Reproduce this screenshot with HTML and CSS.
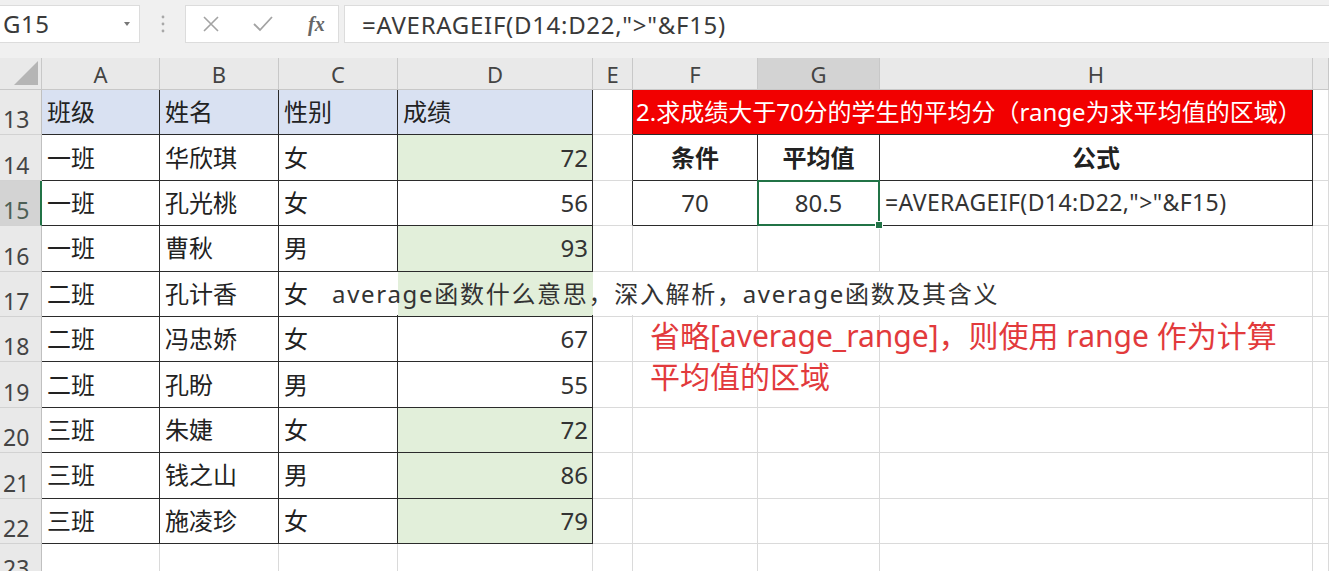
FILE: index.html
```html
<!DOCTYPE html>
<html lang="zh">
<head>
<meta charset="utf-8">
<title>AVERAGEIF</title>
<link rel="stylesheet" href="styles.css">
</head>
<body>
<div class="toolbar">
  <div class="namebox"><span class="name">G15</span><span class="dd"></span></div>
  <div class="grip"><svg width="6" height="20" viewBox="0 0 6 20"><circle cx="3" cy="3" r="1.4" fill="#a8a8a8"/><circle cx="3" cy="10" r="1.4" fill="#a8a8a8"/><circle cx="3" cy="17" r="1.4" fill="#a8a8a8"/></svg></div>
  <div class="fnbtns">
    <svg class="ic" width="18" height="18" viewBox="0 0 18 18"><path d="M2 2 L16 16 M16 2 L2 16" stroke="#a3a3a3" stroke-width="1.6" fill="none"/></svg>
    <svg class="ic" width="22" height="18" viewBox="0 0 22 18"><path d="M2 9 L8 15 L20 2" stroke="#a3a3a3" stroke-width="1.8" fill="none"/></svg>
    <span class="fx">fx</span>
  </div>
  <div class="formula">=AVERAGEIF(D14:D22,"&gt;"&amp;F15)</div>
</div>

<div class="sheet">
  <div class="ch corner"></div>
  <div class="ch">A</div><div class="ch">B</div><div class="ch">C</div><div class="ch">D</div><div class="ch">E</div><div class="ch">F</div><div class="ch sel">G</div><div class="ch">H</div><div class="ch"></div>

  <div class="rh">13</div>
  <div class="c t hd">班级</div><div class="c t hd">姓名</div><div class="c t hd">性别</div><div class="c t hd">成绩</div><div class="c e"></div>
  <div class="c red">2.求成绩大于70分的学生的平均分（range为求平均值的区域）</div><div class="c"></div>

  <div class="rh">14</div>
  <div class="c t">一班</div><div class="c t">华欣琪</div><div class="c t">女</div><div class="c t g num">72</div><div class="c e"></div>
  <div class="c t2 b ctr">条件</div><div class="c t2 b ctr">平均值</div><div class="c t2 b ctr">公式</div><div class="c"></div>

  <div class="rh rsel">15</div>
  <div class="c t">一班</div><div class="c t">孔光桃</div><div class="c t">女</div><div class="c t num">56</div><div class="c e"></div>
  <div class="c t2 ctr">70</div><div class="c t2 ctr active">80.5</div><div class="c t2 fml">=AVERAGEIF(D14:D22,"&gt;"&amp;F15)</div><div class="c"></div>

  <div class="rh">16</div>
  <div class="c t">一班</div><div class="c t">曹秋</div><div class="c t">男</div><div class="c t g num">93</div><div class="c"></div>
  <div class="c"></div><div class="c"></div><div class="c"></div><div class="c"></div>

  <div class="rh">17</div>
  <div class="c t">二班</div><div class="c t">孔计香</div><div class="c t">女</div><div class="c t g num"></div><div class="c"></div>
  <div class="c"></div><div class="c"></div><div class="c"></div><div class="c"></div>

  <div class="rh">18</div>
  <div class="c t">二班</div><div class="c t">冯忠娇</div><div class="c t">女</div><div class="c t num">67</div><div class="c"></div>
  <div class="c"></div><div class="c"></div><div class="c"></div><div class="c"></div>

  <div class="rh">19</div>
  <div class="c t">二班</div><div class="c t">孔盼</div><div class="c t">男</div><div class="c t num">55</div><div class="c"></div>
  <div class="c"></div><div class="c"></div><div class="c"></div><div class="c"></div>

  <div class="rh">20</div>
  <div class="c t">三班</div><div class="c t">朱婕</div><div class="c t">女</div><div class="c t g num">72</div><div class="c"></div>
  <div class="c"></div><div class="c"></div><div class="c"></div><div class="c"></div>

  <div class="rh">21</div>
  <div class="c t">三班</div><div class="c t">钱之山</div><div class="c t">男</div><div class="c t g num">86</div><div class="c"></div>
  <div class="c"></div><div class="c"></div><div class="c"></div><div class="c"></div>

  <div class="rh">22</div>
  <div class="c t">三班</div><div class="c t">施凌珍</div><div class="c t">女</div><div class="c t g num">79</div><div class="c"></div>
  <div class="c"></div><div class="c"></div><div class="c"></div><div class="c"></div>

  <div class="rh">23</div>
  <div class="c"></div><div class="c"></div><div class="c"></div><div class="c"></div><div class="c"></div>
  <div class="c"></div><div class="c"></div><div class="c"></div><div class="c"></div>
</div>

<div class="overlay">average函数什么意思，深入解析，average函数及其含义</div>
<div class="note">省略[average_range]，则使用 range 作为计算<br>平均值的区域</div>
</body>
</html>
```

FILE: styles.css
```css
html, body {
  margin: 0;
  padding: 0;
}
body {
  width: 1329px;
  height: 571px;
  overflow: hidden;
  position: relative;
  background: #ffffff;
  font-family: "Noto Sans", "Noto Sans CJK SC", sans-serif;
  color: #222;
}

/* formula bar */
.toolbar {
  display: flex;
  align-items: flex-start;
  height: 58px;
  box-sizing: border-box;
  padding-top: 5px;
  background: #f0f0f0;
}
.namebox {
  width: 140px;
  height: 38px;
  box-sizing: border-box;
  background: #fff;
  border: 1px solid #dcdcdc;
  border-left: none;
  display: flex;
  align-items: center;
  justify-content: space-between;
  padding: 0 9px 0 3px;
}
.name {
  font-size: 24px;
  letter-spacing: 0.5px;
  color: #3a3a3a;
  line-height: 1;
}
.dd {
  width: 0;
  height: 0;
  border-left: 3.5px solid transparent;
  border-right: 3.5px solid transparent;
  border-top: 4px solid #777;
}
.grip {
  width: 45px;
  height: 38px;
  display: flex;
  align-items: center;
  justify-content: center;
}
.fnbtns {
  width: 154px;
  height: 38px;
  box-sizing: border-box;
  background: #fff;
  border: 1px solid #dcdcdc;
  display: flex;
  align-items: center;
  padding-left: 16px;
  gap: 32px;
}
.fx {
  font-family: "Liberation Serif", serif;
  font-style: italic;
  font-weight: bold;
  font-size: 20px;
  color: #666;
  margin-left: 2px;
}
.formula {
  margin-left: 5px;
  flex: 1;
  height: 38px;
  box-sizing: border-box;
  background: #fff;
  border: 1px solid #dcdcdc;
  border-right: none;
  display: flex;
  align-items: center;
  padding-left: 17px;
  font-size: 24px;
  letter-spacing: 0.7px;
  color: #3a3a3a;
}

/* sheet grid */
.sheet {
  display: grid;
  grid-template-columns: 42px 118px 119px 119px 195px 40px 125px 122px 433px 1fr;
  grid-template-rows: 32px repeat(10, 45.4px) 40px;
}
.ch, .rh, .c {
  box-sizing: border-box;
  border-right: 1px solid #dadada;
  border-bottom: 1px solid #dadada;
  display: flex;
  align-items: center;
  white-space: nowrap;
  overflow: visible;
}
.ch {
  background: #e9e9e9;
  border-right-color: #c8c8c8;
  border-bottom-color: #c8c8c8;
  justify-content: center;
  font-size: 22px;
  color: #444;
}
.ch.sel {
  background: #d3d3d3;
}
.corner {
  position: relative;
}
.corner::after {
  content: "";
  position: absolute;
  right: 3px;
  bottom: 4px;
  width: 24px;
  height: 24px;
  background: #b5b5b5;
  clip-path: polygon(100% 0, 100% 100%, 0 100%);
}
.rh {
  background: #e9e9e9;
  border-right-color: #c0c0c0;
  border-bottom-color: #d2d2d2;
  align-items: flex-end;
  padding: 0 0 3px 3px;
  font-size: 23px;
  line-height: 1;
  color: #444;
}
.rh.rsel {
  background: #d3d3d3;
  border-right: 2px solid #217346;
  color: #4d5f55;
}
.c {
  font-size: 24px;
  line-height: 1;
  padding-left: 5px;
  color: #222;
}
.t {
  border-right-color: #2b2b2b;
  border-bottom-color: #2b2b2b;
}
.hd {
  background: #d9e1f2;
}
.g {
  background: #e2efda;
}
.num {
  justify-content: flex-end;
  padding-right: 4px;
  color: #333;
}
.e {
  border-right-color: #2b2b2b;
}
.red {
  grid-column: span 3;
  background: #f20000;
  color: #fff;
  padding-left: 3px;
  border-right-color: #2b2b2b;
  border-bottom-color: #2b2b2b;
}
.t2 {
  border-right-color: #2b2b2b;
  border-bottom-color: #2b2b2b;
}
.b {
  font-weight: bold;
}
.ctr {
  justify-content: center;
  padding-left: 0;
  color: #333;
}
.b.ctr {
  color: #222;
}
.fml {
  font-size: 23px;
  letter-spacing: 0.4px;
  color: #333;
}
.active {
  position: relative;
}
.active::before {
  content: "";
  position: absolute;
  left: -1px;
  top: -1px;
  right: -1px;
  bottom: -1px;
  border: 2px solid #217346;
}
.active::after {
  content: "";
  position: absolute;
  right: -4px;
  bottom: -4px;
  width: 6px;
  height: 6px;
  background: #217346;
  border: 1px solid #fff;
}

/* overlays */
.overlay {
  position: absolute;
  left: 322px;
  top: 272px;
  width: 700px;
  height: 43px;
  box-sizing: border-box;
  padding-left: 10px;
  display: flex;
  align-items: center;
  background: linear-gradient(90deg, #fff 0, #fff 76px, #e2efda 76px, #e2efda 271px, #fff 271px);
  font-size: 24px;
  letter-spacing: 1.7px;
  line-height: 1;
  color: #333;
  white-space: nowrap;
}
.note {
  position: absolute;
  left: 650px;
  top: 315px;
  font-size: 30px;
  line-height: 41px;
  color: #e23a3c;
  white-space: nowrap;
}
```
